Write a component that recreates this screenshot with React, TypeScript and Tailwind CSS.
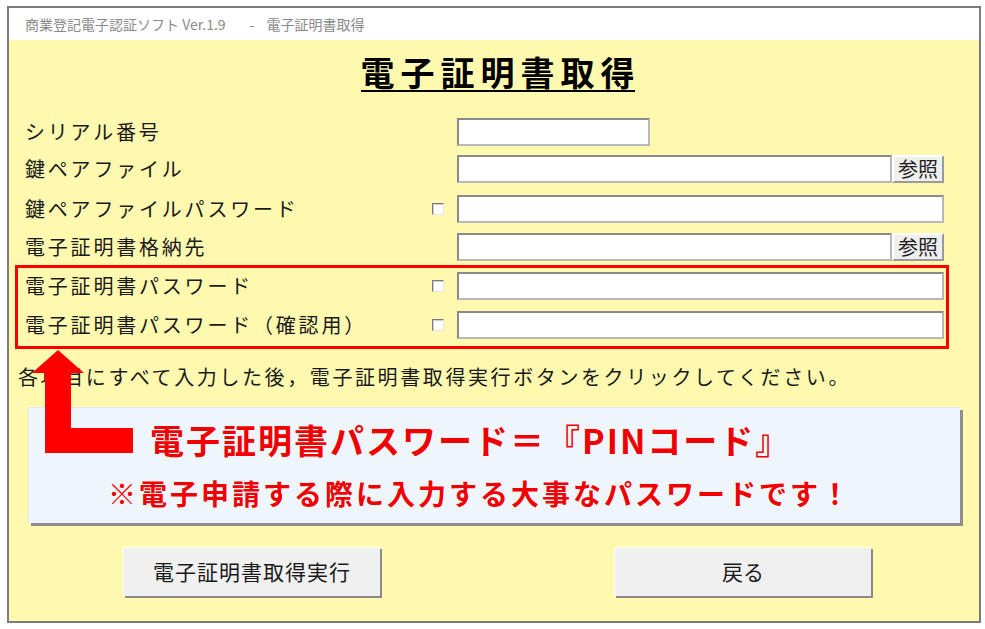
const jp = { fontFamily: '"Noto Sans CJK JP", "Noto Sans", sans-serif' };

const inputCls =
	"h-[28px] bg-white border-2 border-t-[#8a8a8a] border-l-[#8a8a8a] border-r-[#b8b8b8] border-b-[#b8b8b8]";

const CheckBox = () => (
	<div className="w-[12px] h-[12px] bg-white border border-t-[#7a7a7a] border-l-[#7a7a7a] border-r-[#e6e6e6] border-b-[#e6e6e6] shadow-[inset_1px_1px_0_#d0d0d0]" />
);

const BrowseButton = () => (
	<button className="w-[52px] h-[28px] bg-[#efefef] border-2 border-t-white border-l-white border-r-[#9a9a9a] border-b-[#9a9a9a] text-[20px] leading-none text-[#222] flex items-center justify-center">
		参照
	</button>
);

type RowProps = {
	label: string;
	check?: boolean;
	browse?: boolean;
	short?: boolean;
	className?: string;
};

const Row = ({ label, check, browse, short, className = "" }: RowProps) => (
	<div className={`flex items-center h-[28px] ${className}`}>
		<div className="w-[407px] text-[20px] tracking-[2.8px] leading-none text-[#1a1a1a] whitespace-nowrap">
			{label}
		</div>
		<div className="w-[25px] flex">{check && <CheckBox />}</div>
		{short ? (
			<div className={`${inputCls} w-[193px]`} />
		) : browse ? (
			<div className="flex">
				<div className={`${inputCls} w-[435px]`} />
				<BrowseButton />
			</div>
		) : (
			<div className={`${inputCls} w-[487px]`} />
		)}
	</div>
);

export default function App() {
	return (
		<div className="relative w-[985px] h-[629px] bg-white pt-[6px] pl-[7px]" style={jp}>
			<div className="w-[974px] h-[617px] border-2 border-[#7c7c7c] flex flex-col">
				{/* title bar */}
				<div className="h-[32px] bg-white flex items-center pl-[16px] text-[14px] text-[#8a8a8a] whitespace-nowrap">
					<span>商業登記電子認証ソフト Ver.1.9</span>
					<span className="ml-[24px]">-</span>
					<span className="ml-[12px]">電子証明書取得</span>
				</div>

				<div className="flex-1 bg-[#fff9b0] flex flex-col">
					{/* heading */}
					<div className="mt-[14px] flex justify-center pl-[7px]">
						<span className="inline-block border-b-2 border-black text-[34px] font-bold leading-[36px] text-black">
							<span className="tracking-[6px]">電子証明書取</span>
							<span>得</span>
						</span>
					</div>

					{/* form rows */}
					<div className="flex flex-col mt-[26px] pl-[16px]">
						<Row label="シリアル番号" short />
						<Row label="鍵ペアファイル" browse className="mt-[9px]" />
						<Row label="鍵ペアファイルパスワード" check className="mt-[12px]" />
						<Row label="電子証明書格納先" browse className="mt-[10px]" />
					</div>

					<div className="mt-[4px] ml-[6px] w-[934px] border-[3px] border-[#ff0000] pl-[7px] pt-[4px] pb-[7px]">
						<Row label="電子証明書パスワード" check />
						<Row label="電子証明書パスワード（確認用）" check className="mt-[11px]" />
					</div>

					{/* instruction */}
					<div className="mt-[16px] pl-[9px] text-[20px] tracking-[2.6px] leading-[24px] text-[#1a1a1a] whitespace-nowrap">
						各項目にすべて入力した後，電子証明書取得実行ボタンをクリックしてください。
					</div>

					{/* callout */}
					<div className="mt-[18px] ml-[19px] w-[932px] h-[116px] bg-[#eef6fc] border-t border-l border-[#e2e8ee] shadow-[3px_3px_0_#8e8e8e] flex flex-col">
						<div className="mt-[12px] pl-[121px] text-[34px] font-bold leading-[40px] tracking-[2px] text-[#f00000] whitespace-nowrap">
							電子証明書パスワード＝『PINコード』
						</div>
						<div className="mt-[16px] pl-[79px] text-[28px] font-bold leading-[34px] tracking-[3px] text-[#f00000] whitespace-nowrap">
							※電子申請する際に入力する大事なパスワードです！
						</div>
					</div>

					{/* buttons */}
					<div className="mt-[24px] flex">
						<button className="ml-[114px] w-[257px] h-[49px] bg-[#f0f0f0] border-t border-l border-white shadow-[2px_2px_0_#8a8a8a] text-[21px] tracking-[1px] text-[#1a1a1a]">
							電子証明書取得実行
						</button>
						<button className="ml-[234px] w-[257px] h-[49px] bg-[#f0f0f0] border-t border-l border-white shadow-[2px_2px_0_#8a8a8a] text-[21px] text-[#1a1a1a]">
							戻る
						</button>
					</div>
				</div>
			</div>

			{/* red arrow annotation */}
			<svg className="absolute left-0 top-0 pointer-events-none" width="985" height="629">
				<polygon
					points="58,350 84,373 71,373 71,428 133,428 133,453 45,453 45,373 32,373"
					fill="#ff0000"
				/>
			</svg>
		</div>
	);
}
